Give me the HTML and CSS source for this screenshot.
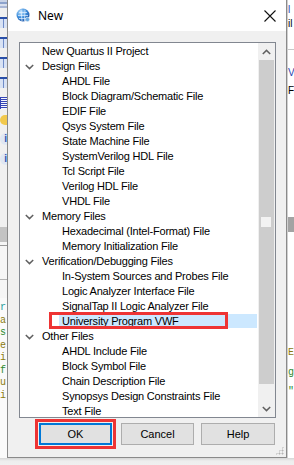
FILE: index.html
```html
<!DOCTYPE html>
<html lang="en">
<head>
    <meta charset="UTF-8">
    <title>New</title>
    <link rel="stylesheet" href="styles.css">
</head>
<body>
    <!-- desktop behind the dialog, left edge -->
    <div class="desk-left">
        <div class="tb-lines"></div>
        <div class="tb-icon grid"></div>
        <div class="tb-icon grid"></div>
        <div class="tb-icon grid"></div>
        <div class="tb-icon grid"></div>
        <div class="tb-icon list"></div>
        <div class="tb-icon bulb"></div>
        <div class="tb-icon info">i</div>
        <div class="tb-icon info">i</div>
        <div class="tb-fill"></div>
        <div class="tb-bar"></div>
        <div class="panel-lines"></div>
        <div class="code-left">
            <span class="c-teal">r</span>
            <span class="c-olive">a</span>
            <span class="c-green">s</span>
            <span class="c-olive">e</span>
            <span class="c-olive">i</span>
            <span class="c-green">f</span>
            <span class="c-olive">u</span>
            <span class="c-olive">i</span>
        </div>
    </div>

    <!-- dialog -->
    <div class="dialog">
        <div class="titlebar">
            <svg class="app-icon" width="15" height="15" viewBox="0 0 15 15">
                <defs>
                    <radialGradient id="globe" cx="0.35" cy="0.3" r="0.8">
                        <stop offset="0" stop-color="#bfe3ff"/>
                        <stop offset="0.5" stop-color="#3f8fdc"/>
                        <stop offset="1" stop-color="#1d4f9e"/>
                    </radialGradient>
                </defs>
                <circle cx="7" cy="7" r="6.5" fill="url(#globe)"/>
                <path d="M3 4.5 L11 4.5 M2 7.5 L12 7.5 M3 10.5 L11 10.5 M5 1.5 L6 13 M9 1.5 L8.5 13" stroke="#e8f4ff" stroke-width="0.7" fill="none"/>
                <circle cx="11.5" cy="11.5" r="2.2" fill="#6aa9e0" stroke="#fff" stroke-width="0.6"/>
            </svg>
            <span class="title">New</span>
            <svg class="close" width="12" height="12" viewBox="0 0 12 12">
                <path d="M0.5 0.5 L11.5 11.5 M11.5 0.5 L0.5 11.5" stroke="#111" stroke-width="1.1"/>
            </svg>
        </div>

        <div class="dlg-body">
            <div class="listbox">
                <div class="tree">
                    <div class="row top"><span class="label">New Quartus II Project</span></div>
                    <div class="row top"><span class="chev"></span><span class="label">Design Files</span></div>
                    <div class="row child"><span class="label">AHDL File</span></div>
                    <div class="row child"><span class="label">Block Diagram/Schematic File</span></div>
                    <div class="row child"><span class="label">EDIF File</span></div>
                    <div class="row child"><span class="label">Qsys System File</span></div>
                    <div class="row child"><span class="label">State Machine File</span></div>
                    <div class="row child"><span class="label">SystemVerilog HDL File</span></div>
                    <div class="row child"><span class="label">Tcl Script File</span></div>
                    <div class="row child"><span class="label">Verilog HDL File</span></div>
                    <div class="row child"><span class="label">VHDL File</span></div>
                    <div class="row top"><span class="chev"></span><span class="label">Memory Files</span></div>
                    <div class="row child"><span class="label">Hexadecimal (Intel-Format) File</span></div>
                    <div class="row child"><span class="label">Memory Initialization File</span></div>
                    <div class="row top"><span class="chev"></span><span class="label">Verification/Debugging Files</span></div>
                    <div class="row child"><span class="label">In-System Sources and Probes File</span></div>
                    <div class="row child"><span class="label">Logic Analyzer Interface File</span></div>
                    <div class="row child"><span class="label">SignalTap II Logic Analyzer File</span></div>
                    <div class="row child selected"><span class="label">University Program VWF</span><span class="mark-row"></span></div>
                    <div class="row top"><span class="chev"></span><span class="label">Other Files</span></div>
                    <div class="row child"><span class="label">AHDL Include File</span></div>
                    <div class="row child"><span class="label">Block Symbol File</span></div>
                    <div class="row child"><span class="label">Chain Description File</span></div>
                    <div class="row child"><span class="label">Synopsys Design Constraints File</span></div>
                    <div class="row child"><span class="label">Text File</span></div>
                </div>
                <div class="vscroll">
                    <div class="sb-btn up"></div>
                    <div class="sb-thumb"><div class="sb-spot"></div></div>
                    <div class="sb-track"></div>
                    <div class="sb-btn down"></div>
                </div>
            </div>

            <div class="buttons">
                <button class="btn ok">OK<span class="mark-btn"></span></button>
                <button class="btn cancel">Cancel</button>
                <button class="btn help">Help</button>
            </div>
            <div class="grip"></div>
        </div>
    </div>

    <!-- desktop behind the dialog, right edge -->
    <div class="desk-right">
        <div class="r-top">
            <span class="c-blue">l</span>
            <span>il</span>
        </div>
        <div class="r-line"></div>
        <div class="r-mid">
            <span class="c-blue">V</span>
            <span>F</span>
        </div>
        <div class="r-fill"></div>
        <div class="r-bar"></div>
        <div class="code-right">
            <span class="c-olive">E</span>
            <span class="c-green">g</span>
            <span class="c-green">"</span>
        </div>
    </div>

    <div class="desk-bottom"></div>
</body>
</html>
```

FILE: styles.css
```css
body {
    margin: 0;
    width: 294px;
    height: 465px;
    overflow: hidden;
    display: grid;
    grid-template-columns: 7px 280px 7px;
    grid-template-rows: 458px 7px;
    background: #ececec;
    font-family: 'Liberation Sans', Arial, sans-serif;
}

/* ---------- desktop edges ---------- */
.desk-left {
    background: #f0f0f0;
    display: flex;
    flex-direction: column;
    overflow: hidden;
}
.tb-lines {
    height: 8px;
    background: linear-gradient(#c9d3e6 0 2px, #8da3cc 2px 4px, #d9e0ee 4px 6px, #a9b7d6 6px 8px);
}
.tb-icon {
    height: 11px;
    margin-top: 9px;
    width: 7px;
}
.tb-icon.grid {
    background:
        linear-gradient(#2a4fa8 0 2px, transparent 2px),
        repeating-linear-gradient(90deg, #d8e2f4 0 3px, #6f8cc8 3px 4px),
        #d8e2f4;
}
.tb-icon.list {
    height: 12px;
    background: repeating-linear-gradient(#3444b5 0 1px, #f4f6ff 1px 2px);
    border-left: 1px solid #3444b5;
    box-sizing: border-box;
}
.tb-icon.bulb {
    height: 10px;
    margin-top: 6px;
    background: #f2c94c;
    border-radius: 5px 0 0 5px;
}
.tb-icon.info {
    height: 12px;
    margin-top: 8px;
    background: #dfe7f3;
    border-radius: 6px 0 0 6px;
    color: #2b55b5;
    font: bold 10px/12px 'Liberation Sans', sans-serif;
    text-align: right;
}
.tb-fill {
    height: 62px;
}
.tb-bar {
    height: 15px;
    background: #c3c3c3;
}
.panel-lines {
    height: 56px;
    background: linear-gradient(#f6f6f6 0 3px, #9a9a9a 3px 4px, #f6f6f6 4px 37px, #b4b4b4 37px 38px, #f6f6f6 38px);
}
.code-left, .code-right {
    display: flex;
    flex-direction: column;
    font: 10px/12.5px 'Liberation Mono', monospace;
    background: #fafafa;
    flex: 1;
    white-space: nowrap;
}
.code-left {
    padding-top: 4px;
}
.c-teal { color: #2a9d9d; }
.c-olive { color: #8a7a10; }
.c-green { color: #2f8a2f; }
.c-blue { color: #1f3fb0; }

.desk-right {
    background: #ffffff;
    display: flex;
    flex-direction: column;
    overflow: hidden;
    font-size: 10px;
    line-height: 14px;
    white-space: nowrap;
    border-left: 1px solid #d0d0d0;
}
.r-top {
    display: flex;
    flex-direction: column;
    padding-top: 3px;
}
.r-line {
    height: 1px;
    margin-top: 18px;
    background: #c8c8c8;
}
.r-mid {
    display: flex;
    flex-direction: column;
    padding-top: 14px;
    line-height: 18px;
}
.r-fill {
    height: 117px;
}
.r-bar {
    height: 15px;
    background: #a3a3a3;
}
.code-right {
    padding-top: 115px;
    gap: 7px;
    background: #ffffff;
}

.desk-bottom {
    grid-column: 1 / 4;
    background: linear-gradient(#d6d6d6, #eeeeee 3px, #f0f0f0);
}

/* ---------- dialog ---------- */
.dialog {
    border: 1px solid #8a8a8a;
    border-top: none;
    display: flex;
    flex-direction: column;
    background: #f0f0f0;
}
.titlebar {
    height: 31px;
    background: #ffffff;
    display: flex;
    align-items: center;
    padding-left: 8px;
    box-sizing: border-box;
}
.app-icon {
    margin-top: -1px;
}
.title {
    margin-left: 7px;
    font-family: 'Noto Sans', 'Open Sans', sans-serif;
    font-size: 12px;
    color: #000;
}
.close {
    margin-left: auto;
    margin-right: 10px;
}

.dlg-body {
    flex: 1;
    position: relative;
    padding: 11px 0 0 11px;
}
.listbox {
    width: 257px;
    height: 376px;
    box-sizing: border-box;
    border: 1px solid #828790;
    background: #ffffff;
    display: flex;
}
.tree {
    flex: 1;
    padding-top: 1px;
    font-size: 11px;
    letter-spacing: -0.2px;
    color: #000;
}
.row {
    height: 15px;
    line-height: 15px;
    display: flex;
    align-items: center;
    white-space: nowrap;
    position: relative;
}
.row.top .label {
    position: absolute;
    left: 22px;
}
.row.child .label {
    margin-left: 39px;
    padding-left: 3px;
    flex: 1;
    margin-right: 1px;
}
.row.selected .label {
    background: #cce8ff;
    height: 14px;
    line-height: 14px;
    margin-top: -1px;
}
.chev {
    margin-left: 5px;
    width: 9px;
    height: 6px;
    background: no-repeat center / 9px 6px url("data:image/svg+xml,%3Csvg xmlns='http://www.w3.org/2000/svg' width='9' height='6'%3E%3Cpath d='M0.8 1 L4.5 4.6 L8.2 1' fill='none' stroke='%23606060' stroke-width='1.5'/%3E%3C/svg%3E");
}

/* annotation boxes */
.mark-row {
    position: absolute;
    left: 29px;
    top: -2px;
    width: 179px;
    height: 17px;
    box-sizing: border-box;
    border: 3px solid #ee3434;
}
.mark-btn {
    position: absolute;
    left: -6px;
    top: -6px;
    right: -6px;
    bottom: -6px;
    border: 3px solid #ee3434;
}

/* scrollbar */
.vscroll {
    width: 17px;
    display: flex;
    flex-direction: column;
    background: #f0f0f0;
}
.sb-btn {
    height: 17px;
    background: no-repeat center / 9px 6px;
}
.sb-btn.up {
    background-image: url("data:image/svg+xml,%3Csvg xmlns='http://www.w3.org/2000/svg' width='9' height='6'%3E%3Cpath d='M0.8 5 L4.5 1.4 L8.2 5' fill='none' stroke='%23606060' stroke-width='1.5'/%3E%3C/svg%3E");
}
.sb-btn.down {
    background-image: url("data:image/svg+xml,%3Csvg xmlns='http://www.w3.org/2000/svg' width='9' height='6'%3E%3Cpath d='M0.8 1 L4.5 4.6 L8.2 1' fill='none' stroke='%23606060' stroke-width='1.5'/%3E%3C/svg%3E");
}
.sb-thumb {
    height: 324px;
    margin: 0 1px;
    background: #cdcdcd;
}
.sb-spot {
    width: 10px;
    height: 10px;
    margin: 157px 0 0 2px;
    background: #f2f2f2;
}
.sb-track {
    flex: 1;
}

/* buttons */
.buttons {
    display: flex;
    margin-top: 5px;
    padding-left: 20px;
}
.btn {
    position: relative;
    height: 22px;
    width: 73px;
    margin: 0;
    padding: 0;
    background: #e1e1e1;
    border: 1px solid #adadad;
    font-family: 'Liberation Sans', Arial, sans-serif;
    font-size: 11px;
    color: #000;
}
.btn.ok {
    border: 2px solid #0078d7;
}
.btn.cancel {
    margin-left: 9px;
}
.btn.help {
    margin-left: 7px;
    width: 74px;
}
.grip {
    position: absolute;
    right: 2px;
    bottom: 2px;
    width: 9px;
    height: 9px;
    background:
        radial-gradient(circle, #b5b5b5 0.9px, transparent 1.1px) 0 0 / 3px 3px;
    clip-path: polygon(100% 0, 100% 100%, 0 100%);
}
```
